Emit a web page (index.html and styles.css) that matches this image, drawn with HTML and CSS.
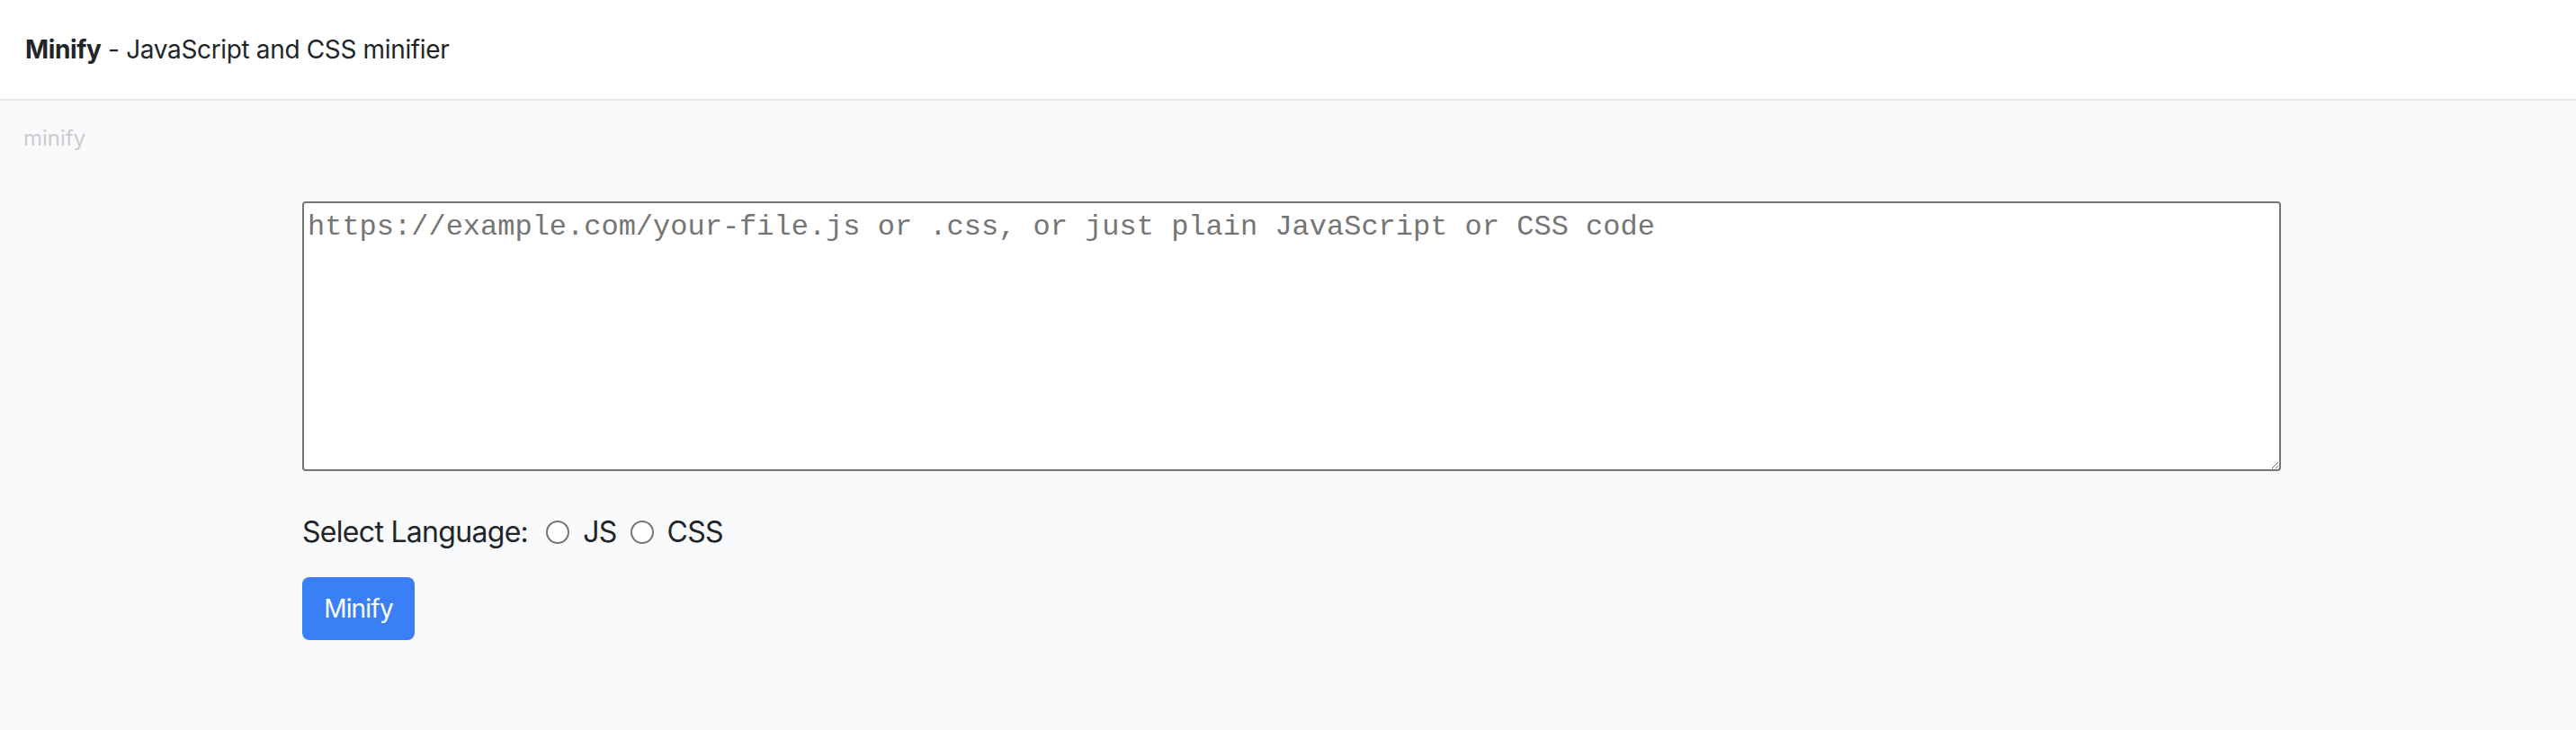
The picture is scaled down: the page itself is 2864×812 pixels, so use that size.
FILE: index.html
```html
<!DOCTYPE html>
<html lang="en">
<head>
<meta charset="utf-8">
<title>Minify - JavaScript and CSS minifier</title>
<link rel="stylesheet" href="styles.css">
</head>
<body>
<header class="topbar">
  <div class="brand"><strong>Minify</strong> - JavaScript and CSS minifier</div>
</header>
<div class="crumb">minify</div>
<main class="container">
  <textarea class="code" placeholder="https://example.com/your-file.js or .css, or just plain JavaScript or CSS code"></textarea>
  <div class="lang-row">
    <span class="lang-label">Select Language:</span>
    <label class="opt"><input type="radio" name="lang" value="js"><span>JS</span></label>
    <label class="opt"><input type="radio" name="lang" value="css"><span>CSS</span></label>
  </div>
  <button class="btn" type="button">Minify</button>
</main>
</body>
</html>
```
FILE: styles.css
```css
html, body {
  margin: 0;
  padding: 0;
}
body {
  background: #f9fafb;
  font-family: Inter, "Noto Sans", sans-serif;
  color: #1f2328;
  min-height: 812px;
}
.topbar {
  height: 110px;
  background: #ffffff;
  border-bottom: 2px solid #e5e7eb;
  display: flex;
  align-items: center;
  padding-left: 28px;
}
.brand {
  font-size: 28px;
  line-height: 40px;
  letter-spacing: -0.35px;
  color: #212529;
}
.brand strong {
  font-weight: 700;
}
.crumb {
  padding: 26px 0 0 26px;
  font-size: 24px;
  line-height: 32px;
  color: #cbcccf;
}
.container {
  width: 2200px;
  margin: 54px 0 0 calc(50% - 1096px);
}
.code {
  display: block;
  box-sizing: border-box;
  width: 2200px;
  height: 300px;
  margin: 0;
  border: 2px solid #767676;
  border-radius: 4px;
  padding: 9px 4px 4px;
  background: #ffffff;
  font-family: "Liberation Mono", monospace;
  font-size: 32px;
  line-height: 36px;
  color: #222;
  resize: vertical;
}
.code::placeholder {
  color: #757575;
}
.lang-row {
  display: flex;
  align-items: center;
  margin-top: 44px;
  font-size: 32px;
  line-height: 48px;
  letter-spacing: -0.7px;
  color: #212529;
}
.opt {
  display: flex;
  align-items: center;
}
.opt input {
  appearance: none;
  -webkit-appearance: none;
  box-sizing: border-box;
  width: 26px;
  height: 26px;
  margin: 0 15px 0 20px;
  border: 2px solid #767676;
  border-radius: 50%;
  background: #ffffff;
}
.opt + .opt input {
  margin-left: 15px;
}
.btn {
  display: flex;
  align-items: center;
  justify-content: center;
  box-sizing: border-box;
  margin-top: 26px;
  width: 125px;
  height: 70px;
  border: 0;
  border-radius: 8px;
  background: #3b7ff6;
  color: #ffffff;
  font-family: Inter, "Noto Sans", sans-serif;
  font-size: 28px;
  letter-spacing: -0.8px;
  padding: 0;
}
```
